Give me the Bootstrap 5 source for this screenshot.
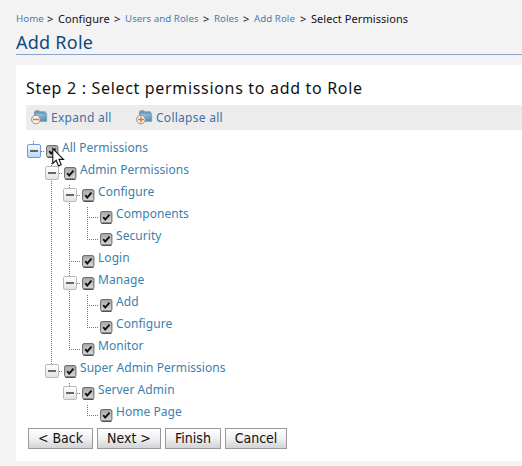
<!DOCTYPE html>
<html lang="en">
<head>
<meta charset="utf-8">
<title>Add Role</title>
<link rel="stylesheet" href="https://cdn.jsdelivr.net/npm/bootstrap@5.3.0/dist/css/bootstrap.min.css">
<style>
body{background:#f3f3f3;font-family:"Noto Sans","Open Sans",sans-serif;color:#111;height:466px;overflow:hidden}
a{text-decoration:none}
.crumbs{height:19px;margin-top:9px;margin-bottom:1px;font-size:11px;line-height:19px;white-space:nowrap;letter-spacing:.06px}
.crumbs a{color:#4a7ab5;font-size:9.7px}
.crumbs>*{flex:none}
.w-a{width:31px}.w-b{width:11px}.w-c{width:56px}.w-d{width:78px}.w-e{width:29px}.w-f{width:46px}
.page-title{height:26px;line-height:27px;font-size:18px;font-weight:400;letter-spacing:.25px;color:#0d4a80;border-bottom:1px solid #8ba5cb}
.panel{margin-top:10px;height:396px;padding:11px 0 0 10px}
.step{font-size:16px;line-height:24px;height:29px;font-weight:400;letter-spacing:.68px;white-space:nowrap}
.tools{height:25px;background:#ececec;padding-left:5px;font-size:12px;line-height:24px;letter-spacing:.27px}
.tools a{color:#3e70a9;width:105px}
.tools svg{margin-right:3px;flex:none}
.tree{margin:11px 0 0 1px}
.tree,.tree ul{list-style:none;padding:0}
.tree ul{margin:0 0 0 18px}
.tree li{background:repeating-linear-gradient(#777 0 1px,transparent 1px 2px) 6px 0/1px 100% no-repeat}
.tree li:last-child{background-size:1px 11px}
.node{height:22px;background:repeating-linear-gradient(90deg,#777 0 1px,transparent 1px 2px) 6px 10px/12px 1px no-repeat}
.node>*{flex:none}
.node a{font-size:12px;line-height:14px;color:#3c7fae;white-space:nowrap;margin-left:3px;letter-spacing:.05px}
.toggle,.leaf{width:14px;height:14px;margin-top:3px}
.toggle{border:1px solid #bbb;border-radius:2px;background:linear-gradient(#666,#666) center/8px 2px no-repeat,linear-gradient(#fff,#e2e2e2)}
.toggle.active{border-color:#7298cd;background:linear-gradient(#666,#666) center/8px 2px no-repeat,linear-gradient(#f3f8ff,#bcd6f8)}
.check{width:13px;height:13px;margin:4px 0 0 5px}
.form-actions{padding:1px 0 0 2px;gap:4px}
.form-actions .btn{height:21px;padding:0;border:1px solid #999;border-radius:0;background:linear-gradient(#fff,#f0f0f1 50%,#d2d3d6);color:#111;font:14px/19px "DejaVu Sans Condensed","DejaVu Sans",sans-serif;font-stretch:condensed}
.b1{width:65px}.b2{width:64px}.b3{width:56px}.b4{width:62px}
.pointer{position:absolute;left:52px;top:147px}
</style>
</head>
<body>
<svg width="0" height="0" class="position-absolute"><defs>
<linearGradient id="cg" x2="0" y2="1"><stop stop-color="#a9a9a9"/><stop offset="1" stop-color="#d8d8d8"/></linearGradient>
<linearGradient id="fg" x2=".6" y2="1"><stop stop-color="#a3cbe8"/><stop offset="1" stop-color="#5b8fb3"/></linearGradient>
<symbol id="tick" viewBox="0 0 13 13"><rect x=".6" y=".6" width="11.3" height="11.3" rx="1.5" fill="url(#cg)" stroke="#666"/><path d="M1.5 12.4H11.5" stroke="#444"/><path d="M3.2 6.2L5.2 8.6L9.5 3.6" fill="none" stroke="#111" stroke-width="1.9"/></symbol>
</defs></svg>
<main class="ps-3">
<nav class="crumbs d-flex" aria-label="breadcrumb">
<a href="#" class="w-a">Home</a><span class="w-b">&gt;</span><span class="w-c">Configure</span><span class="w-b">&gt;</span><a href="#" class="w-d">Users and Roles</a><span class="w-b">&gt;</span><a href="#" class="w-e">Roles</a><span class="w-b">&gt;</span><a href="#" class="w-f">Add Role</a><span class="w-b">&gt;</span><span>Select Permissions</span>
</nav>
<h1 class="page-title mb-0">Add Role</h1>
<section class="panel bg-white">
<h2 class="step mb-0">Step 2 : Select permissions to add to Role</h2>
<div class="tools d-flex">
<a href="#" class="d-flex align-items-center"><svg width="17" height="15"><path d="M3.5 10.5V2L4.5.7H8L9 1.8H14.5V10.5Z" fill="#6f9dbd" stroke="#6390b0" stroke-width=".7"/><path d="M4.5 3.4H15.7V11.4H4.5Z" fill="url(#fg)" stroke="#6795b6" stroke-width=".6"/><circle cx="4.9" cy="9.5" r="4.3" fill="#f7f5f2" stroke="#858585" stroke-width=".9"/><path d="M2 9.5H8" stroke="#f0781e" stroke-width="1.6"/></svg>Expand all</a>
<a href="#" class="d-flex align-items-center"><svg width="17" height="15"><path d="M3.5 10.5V2L4.5.7H8L9 1.8H14.5V10.5Z" fill="#6f9dbd" stroke="#6390b0" stroke-width=".7"/><path d="M4.5 3.4H15.7V11.4H4.5Z" fill="url(#fg)" stroke="#6795b6" stroke-width=".6"/><circle cx="4.9" cy="9.5" r="4.3" fill="#f7f5f2" stroke="#858585" stroke-width=".9"/><path d="M2 9.5H8M5 6.5V12.5" stroke="#f0781e" stroke-width="1.6"/></svg>Collapse all</a>
</div>
<ul class="tree">
<li><div class="node d-flex"><span class="toggle active"></span><svg class="check"><use href="#tick"/></svg><a href="#">All Permissions</a></div>
<ul>
<li><div class="node d-flex"><span class="toggle"></span><svg class="check"><use href="#tick"/></svg><a href="#">Admin Permissions</a></div>
<ul>
<li><div class="node d-flex"><span class="toggle"></span><svg class="check"><use href="#tick"/></svg><a href="#">Configure</a></div>
<ul>
<li><div class="node d-flex"><span class="leaf"></span><svg class="check"><use href="#tick"/></svg><a href="#">Components</a></div></li>
<li><div class="node d-flex"><span class="leaf"></span><svg class="check"><use href="#tick"/></svg><a href="#">Security</a></div></li>
</ul></li>
<li><div class="node d-flex"><span class="leaf"></span><svg class="check"><use href="#tick"/></svg><a href="#">Login</a></div></li>
<li><div class="node d-flex"><span class="toggle"></span><svg class="check"><use href="#tick"/></svg><a href="#">Manage</a></div>
<ul>
<li><div class="node d-flex"><span class="leaf"></span><svg class="check"><use href="#tick"/></svg><a href="#">Add</a></div></li>
<li><div class="node d-flex"><span class="leaf"></span><svg class="check"><use href="#tick"/></svg><a href="#">Configure</a></div></li>
</ul></li>
<li><div class="node d-flex"><span class="leaf"></span><svg class="check"><use href="#tick"/></svg><a href="#">Monitor</a></div></li>
</ul></li>
<li><div class="node d-flex"><span class="toggle"></span><svg class="check"><use href="#tick"/></svg><a href="#">Super Admin Permissions</a></div>
<ul>
<li><div class="node d-flex"><span class="toggle"></span><svg class="check"><use href="#tick"/></svg><a href="#">Server Admin</a></div>
<ul>
<li><div class="node d-flex"><span class="leaf"></span><svg class="check"><use href="#tick"/></svg><a href="#">Home Page</a></div></li>
</ul></li>
</ul></li>
</ul></li>
</ul>
<div class="form-actions d-flex">
<button type="button" class="btn b1">&lt; Back</button><button type="button" class="btn b2">Next &gt;</button><button type="button" class="btn b3">Finish</button><button type="button" class="btn b4">Cancel</button>
</div>
</section>
</main>
<svg class="pointer" width="13" height="21"><path d="M.8 1.5V16.4L4.2 13.3L6.5 19L9.2 17.8L7 12.4H11.5Z" fill="#fff" stroke="#111" stroke-width="1.1"/></svg>
<script src="https://cdn.jsdelivr.net/npm/bootstrap@5.3.0/dist/js/bootstrap.bundle.min.js"></script>
</body>
</html>
